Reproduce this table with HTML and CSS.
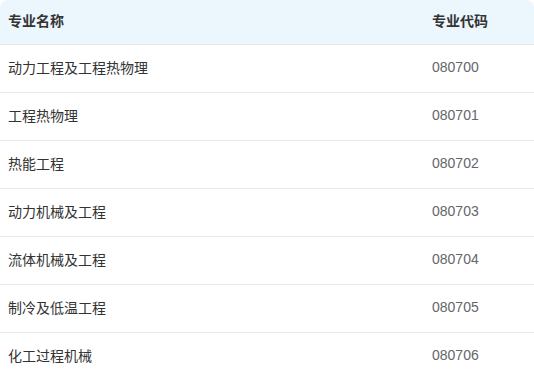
FILE: index.html
```html
<!DOCTYPE html>
<html lang="zh-CN">
<head>
<meta charset="utf-8">
<link rel="stylesheet" href="styles.css">
</head>
<body>
<div class="table">
  <div class="row head"><div class="name">专业名称</div><div class="code">专业代码</div></div>
  <div class="row"><div class="name">动力工程及工程热物理</div><div class="code">080700</div></div>
  <div class="row"><div class="name">工程热物理</div><div class="code">080701</div></div>
  <div class="row"><div class="name">热能工程</div><div class="code">080702</div></div>
  <div class="row"><div class="name">动力机械及工程</div><div class="code">080703</div></div>
  <div class="row"><div class="name">流体机械及工程</div><div class="code">080704</div></div>
  <div class="row"><div class="name">制冷及低温工程</div><div class="code">080705</div></div>
  <div class="row"><div class="name">化工过程机械</div><div class="code">080706</div></div>
</div>
</body>
</html>
```
FILE: styles.css
```css
html, body {
  margin: 0;
  padding: 0;
  background: #fff;
}
body {
  font-family: "Liberation Sans", "Noto Sans CJK SC", sans-serif;
  font-size: 14px;
  color: #333;
}
.table {
  width: 534px;
}
.row {
  display: flex;
  align-items: center;
  box-sizing: border-box;
  height: 48px;
  padding-bottom: 4px;
  border-bottom: 1px solid #e8e8e8;
}
.row.head {
  height: 45px;
  padding-bottom: 5px;
  background: #ecf6fd;
  border-radius: 8px 8px 0 0;
  font-weight: bold;
  color: #333;
}
.name {
  width: 424px;
  padding-left: 8px;
}
.code {
  color: #666;
}
.head .code {
  color: #333;
}
```
